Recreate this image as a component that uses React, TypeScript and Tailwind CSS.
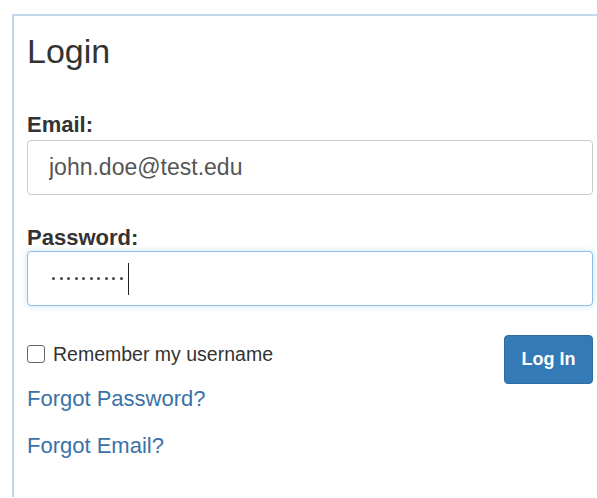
import { useState } from 'react'

const FIELD =
  'flex h-[55px] w-full items-center rounded-[4px] border bg-white pl-[21px] text-[23px] text-[#555]'

function PasswordDots(props: { count: number }) {
  return (
    <div className="flex items-center gap-[4.5px]">
      {Array.from({ length: props.count }, (_, i) => (
        <span key={i} className="h-[3px] w-[3px] rounded-full bg-[#444]" />
      ))}
      {/* text caret sitting after the last dot */}
      <span className="ml-[1px] h-[32px] w-[1px] bg-[#222]" />
    </div>
  )
}

export default function App() {
  const [remember, setRemember] = useState(false)

  return (
    <div className="min-h-[498px] bg-white pl-[12px] pt-[14px] font-['Liberation_Sans',Arial,sans-serif]">
      <div className="border-l-2 border-t-2 border-[#c2d6ec] pb-10 pl-[13px] pr-[4px] pt-[18px]">
        <h1 className="text-[34px] leading-none text-[#333]">Login</h1>

        <form className="mt-[45px]" onSubmit={(e) => e.preventDefault()}>
          <label className="block text-[22px] font-bold leading-[24px] text-[#333]">Email:</label>
          <input
            className={`${FIELD} mt-[3px] border-[#ccc] outline-none`}
            readOnly
            value="john.doe@test.edu"
          />

          <label className="mt-[31px] block text-[22px] font-bold leading-[24px] text-[#333]">
            Password:
          </label>
          <div className={`${FIELD} mt-[1px] h-[54px] border-[#8fbde3] pl-[24px] shadow-[0_0_6px_rgba(102,175,233,0.35)]`}>
            <PasswordDots count={10} />
          </div>

          <div className="mt-[29px] flex items-start justify-between">
            <label className="mt-[8px] flex items-center text-[19.5px] leading-[22px] text-[#333]">
              <input
                type="checkbox"
                checked={remember}
                onChange={(e) => setRemember(e.target.checked)}
                className="m-0 h-[18px] w-[18px] appearance-none rounded-[3px] border border-[#666] bg-white"
              />
              <span className="ml-[8px]">Remember my username</span>
            </label>
            <button
              type="submit"
              className="h-[49px] w-[89px] rounded-[4px] border border-[#2e6da4] bg-[#337ab7] text-[18px] font-bold text-white"
            >
              Log In
            </button>
          </div>
        </form>

        <div className="mt-[4px] flex flex-col items-start gap-[25px] text-[22px] leading-[22px] text-[#3a72a8]">
          <a href="#">Forgot Password?</a>
          <a href="#">Forgot Email?</a>
        </div>
      </div>
    </div>
  )
}
